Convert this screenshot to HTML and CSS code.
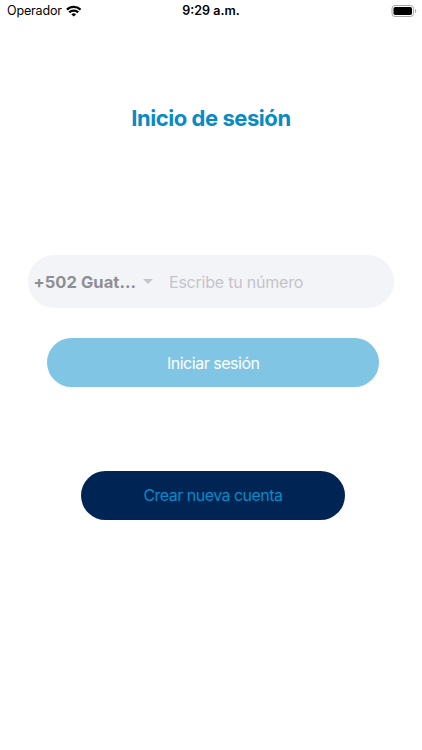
FILE: index.html
```html
<!DOCTYPE html>
<html lang="es">
<head>
	<meta charset="utf-8">
	<title>Inicio de sesión</title>
	<link rel="stylesheet" href="styles.css">
</head>
<body>

<div class="status">
	<div class="carrier">
		<span>Operador</span>
		<svg class="wifi" viewBox="0 0 16 12">
			<path d="M1 4.6A10 10 0 0 1 15 4.6" />
			<path d="M3.4 7.4A6.6 6.6 0 0 1 12.6 7.4" />
			<path class="dot" d="M8 11.8L5.6 9.5A3.4 3.4 0 0 1 10.4 9.5Z" />
		</svg>
	</div>
	<div class="time">9:29 a.m.</div>
	<svg class="battery" viewBox="0 0 26 12">
		<rect class="shell" x="1" y="0.5" width="21.5" height="11" rx="3" />
		<rect x="2.5" y="2" width="18.5" height="8" rx="1.7" />
		<path class="tip" d="M24 4v4a2.2 2.2 0 0 0 0-4z" />
	</svg>
</div>

<main class="login">
	<h1 class="title">Inicio de sesión</h1>
	<form class="form">
		<div class="phone">
			<div class="country">+502 Guat...</div>
			<svg class="arrow" viewBox="0 0 10 5"><path d="M0 0h10L5 5z" /></svg>
			<input class="number" type="tel" placeholder="Escribe tu número">
		</div>
		<button class="btn enter" type="button">Iniciar sesión</button>
		<button class="btn create" type="button">Crear nueva cuenta</button>
	</form>
</main>

</body>
</html>
```

FILE: styles.css
```css
* {
	box-sizing: border-box;
}

body {
	margin: 0;
	background: #fff;
	font-family: Inter, "Liberation Sans", sans-serif;
	overflow: hidden;
}

.status {
	display: grid;
	grid-template-columns: 1fr auto 1fr;
	align-items: center;
	height: 21px;
	padding: 0 5px 0 7px;
	font-size: 12.5px;
	color: #000;
}

.carrier {
	display: flex;
	align-items: center;
	gap: 4px;
	letter-spacing: -0.15px;
}

.wifi {
	width: 15.5px;
	height: 12px;
	fill: none;
	stroke: #000;
	stroke-width: 2.4;
}

.wifi .dot {
	fill: #000;
	stroke: none;
}

.time {
	font-weight: 600;
	margin-right: 2px;
}

.battery {
	justify-self: end;
	width: 26px;
	height: 12px;
}

.battery .shell {
	fill: none;
	stroke: #a6a6a6;
}

.battery .tip {
	fill: #a6a6a6;
}

.login {
	padding: 81px 28px 0;
}

.title {
	margin: 0;
	height: 32px;
	line-height: 32px;
	text-align: center;
	font-size: 22px;
	font-weight: 650;
	letter-spacing: -0.45px;
	color: #078ac5;
}

.form {
	display: flex;
	flex-direction: column;
	margin-top: 121.4px;
}

.phone {
	display: flex;
	align-items: center;
	height: 52.4px;
	margin-left: -0.5px;
	padding-left: 6px;
	border-radius: 27px;
	background: #f3f4f8;
}

.country {
	width: 109px;
	font-size: 16.5px;
	font-weight: 700;
	letter-spacing: 0.05px;
	color: #8e8f94;
	white-space: nowrap;
}

.arrow {
	width: 10px;
	height: 5px;
	fill: #c5c6cb;
}

.number {
	width: 200px;
	margin-left: 16.5px;
	padding: 0;
	border: 0;
	background: none;
	font: 400 16px Inter, sans-serif;
	letter-spacing: -0.22px;
}

.number::placeholder {
	color: #c3c4c8;
}

.btn {
	padding: 0;
	border: 0;
	height: 49px;
	border-radius: 25px;
	font: 400 16px Inter, sans-serif;
}

.enter {
	width: 332.4px;
	margin: 30.4px 0 0 19px;
	background: #80c6e4;
	color: #fff;
	letter-spacing: -0.48px;
}

.create {
	width: 264px;
	margin: 83.4px 0 0 53px;
	background: #002554;
	color: #078ac5;
	letter-spacing: -0.52px;
}
```
